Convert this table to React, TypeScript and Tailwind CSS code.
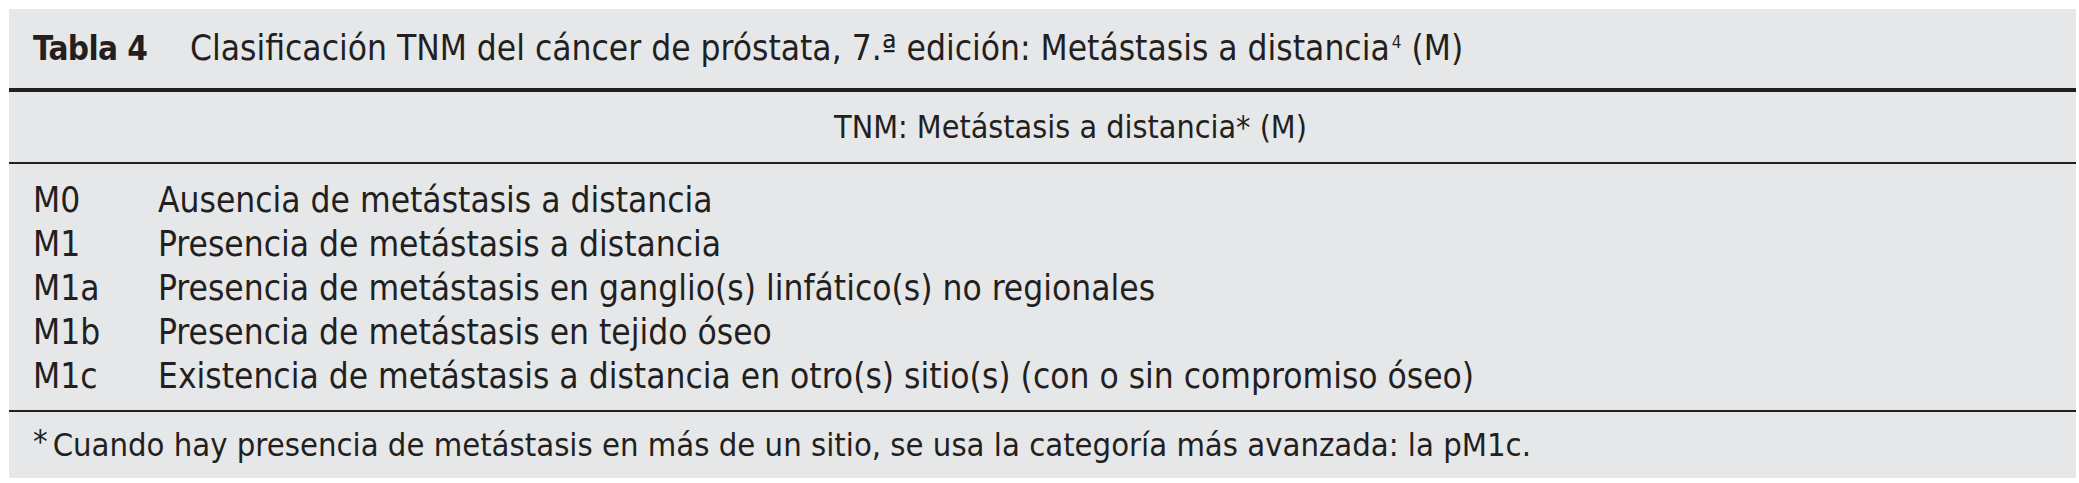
import React from "react";

const rows: [string, string][] = [
  ["M0", "Ausencia de metástasis a distancia"],
  ["M1", "Presencia de metástasis a distancia"],
  ["M1a", "Presencia de metástasis en ganglio(s) linfático(s) no regionales"],
  ["M1b", "Presencia de metástasis en tejido óseo"],
  ["M1c", "Existencia de metástasis a distancia en otro(s) sitio(s) (con o sin compromiso óseo)"],
];

const font = {
  fontFamily: '"DejaVu Sans Condensed", "Liberation Sans Narrow", Lato, sans-serif',
};

export default function App() {
  return (
    <div className="w-[2079px] h-[483px] bg-white pt-[9px] pl-[9px]" style={font}>
      <div className="w-[2067px] h-[469px] bg-[#e6e7e9] text-[#231f20] text-[35px] leading-none flex flex-col">
        {/* title */}
        <div className="h-[79px] flex items-center pl-[24px]">
          <span className="font-bold text-[33px] tracking-[-0.6px] w-[157px]">Tabla 4</span>
          <span>
            Clasificación TNM del cáncer de próstata, 7.ª edición: Metástasis a distancia
            <sup className="text-[17px] relative top-[-12px] ml-[2px]">4</sup> (M)
          </span>
        </div>
        <div className="h-[4px] bg-[#231f20]" />

        {/* sub header */}
        <div className="h-[70px] flex items-center justify-center pl-[56px] text-[32px]">
          <span>TNM: Metástasis a distancia* (M)</span>
        </div>
        <div className="h-[2px] bg-[#231f20]" />

        {/* rows */}
        <div className="pt-[14px] pb-[12px] flex flex-col">
          {rows.map(([code, desc]) => (
            <div key={code} className="h-[44px] flex items-center pl-[24px]">
              <span className="w-[125px]">{code}</span>
              <span>{desc}</span>
            </div>
          ))}
        </div>
        <div className="h-[2px] bg-[#231f20]" />

        {/* footnote */}
        <div className="flex-1 flex items-center pl-[24px] text-[32.5px]">
          <span>
            <span className="relative top-[-4px] mr-[5px]">*</span>Cuando hay presencia de metástasis en más de un sitio, se usa la categoría más avanzada: la pM1c.
          </span>
        </div>
      </div>
    </div>
  );
}
